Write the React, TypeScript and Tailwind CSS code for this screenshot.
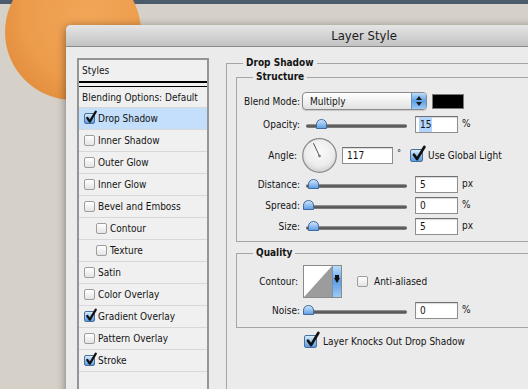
import React from "react";

const F = "font-['DejaVu_Sans_Condensed','DejaVu_Sans','Liberation_Sans',sans-serif]";

function Box({ checked, big }: { checked?: boolean; big?: boolean }) {
  return (
    <div className={big ? "relative shrink-0 w-[13px] h-[13px]" : "relative shrink-0 w-[11px] h-[11px]"}>
      <div
        className={
          checked
            ? "w-full h-full rounded-[2px] border border-[#4a6f9c] bg-gradient-to-b from-[#dcecfb] via-[#93c2ef] to-[#5b9be2]"
            : "w-full h-full rounded-[2px] border border-[#9d9d9d] bg-gradient-to-b from-[#ffffff] to-[#e4e4e4]"
        }
      />
      {checked && (
        <svg
          className={big ? "absolute left-[1px] top-[-4px]" : "absolute left-[1px] top-[-3px]"}
          width={big ? 15 : 12}
          height={big ? 17 : 14}
          viewBox="0 0 12 14"
        >
          <path d="M2.3 8 L4.8 11.6 L10.8 1.6" stroke="#111" strokeWidth="2.2" fill="none" strokeLinecap="round" strokeLinejoin="round" />
        </svg>
      )}
    </div>
  );
}

function Slider({ knob }: { knob: string }) {
  return (
    <div className="relative ml-[3px] w-[104px] h-[17px] shrink-0">
      <div className="absolute left-[3px] right-0 top-[8px] h-[4px] rounded-full bg-gradient-to-b from-[#a8a8a8] via-[#4a4a4a] to-[#8e8e8e]" />
      <svg className={`absolute top-[3px] ${knob}`} width="11" height="10" viewBox="0 0 11 10">
        <defs>
          <linearGradient id="kg" x1="0" y1="0" x2="0" y2="1">
            <stop offset="0" stopColor="#d4e8fb" />
            <stop offset="1" stopColor="#5c9ce2" />
          </linearGradient>
        </defs>
        <path d="M0.5 9.5 L0.5 5.2 Q0.8 0.8 5.5 0.5 Q10.2 0.8 10.5 5.2 L10.5 9.5 Z" fill="url(#kg)" stroke="#3d6b9f" strokeWidth="1" />
      </svg>
    </div>
  );
}

function Input({ value, hl, w }: { value: string; hl?: boolean; w?: string }) {
  return (
    <div
      className={`${w ?? "w-[43px]"} h-[17px] shrink-0 bg-white border border-[#8e8e8e] border-t-[#6f6f6f] shadow-[inset_0_1px_1px_rgba(0,0,0,0.15)] flex items-center pl-[3px]`}
    >
      <span className={hl ? "bg-[#b3d4fc] px-[1px]" : "px-[1px]"}>{value}</span>
    </div>
  );
}

function Label({ children, pr }: { children: React.ReactNode; pr?: string }) {
  return <div className={`w-[63px] shrink-0 text-right ${pr ?? ""}`}>{children}</div>;
}

const listRows: { label: string; checked?: boolean; selected?: boolean; indent?: boolean }[] = [
  { label: "Drop Shadow", checked: true, selected: true },
  { label: "Inner Shadow" },
  { label: "Outer Glow" },
  { label: "Inner Glow" },
  { label: "Bevel and Emboss" },
  { label: "Contour", indent: true },
  { label: "Texture", indent: true },
  { label: "Satin" },
  { label: "Color Overlay" },
  { label: "Gradient Overlay", checked: true },
  { label: "Pattern Overlay" },
  { label: "Stroke", checked: true },
];

export default function App() {
  return (
    <div className={`relative w-[528px] h-[389px] overflow-hidden bg-[#d6d1c8] ${F} text-[10px] text-[#141414]`}>
      <div className="h-[4px] bg-[#4b5b6c]" />
      <div className="absolute left-[5px] top-[-36px] w-[136px] h-[136px] rounded-full bg-[radial-gradient(circle_at_62%_38%,#f2a658_0%,#ec9c4b_55%,#e08a3a_85%,#d57d35_100%)]" />

      <div className="absolute left-[66px] top-[25px] w-[596px] h-[400px] rounded-t-[5px] bg-[#ebebeb] shadow-[0_2px_10px_rgba(0,0,0,0.45)] flex flex-col">
        <div className="h-[22px] shrink-0 rounded-t-[5px] border-b border-[#8a8a8a] bg-gradient-to-b from-[#e5e5e5] to-[#c3c3c3] flex items-center justify-center text-[13px] text-[#1c1c1c]">
          Layer Style
        </div>

        <div className="flex pl-[11px] pt-[11px]">
          {/* Styles list */}
          <div className="w-[132px] h-[340px] shrink-0 border-2 border-[#959595] bg-[#f0f0f0] flex flex-col">
            <div className="h-[23px] border-b-2 border-black flex items-center pl-[3px]">Styles</div>
            <div className="h-[4px] border-b border-black" />
            <div className="h-[21px] border-b border-[#d8d8d8] flex items-center pl-[3px]">Blending Options: Default</div>
            {listRows.map((r) => (
              <div
                key={r.label}
                className={`h-[22px] border-b border-[#d8d8d8] flex items-center gap-[3px] ${r.indent ? "pl-[17px]" : "pl-[5px]"} ${r.selected ? "bg-[#c4dffb]" : ""}`}
              >
                <Box checked={r.checked} />
                <span>{r.label}</span>
              </div>
            ))}
          </div>

          {/* Right panel */}
          <div className="ml-[17px] mt-[-1px]">
            <fieldset className="w-[420px] h-[340px] border border-[#a6a6a6]">
              <legend className="ml-[16px] px-[3px] font-bold leading-[12px]">Drop Shadow</legend>
              <div className="pl-[9px]">
                <fieldset className="mt-[2px] w-[380px] border border-[#a6a6a6]">
                  <legend className="ml-[16px] px-[3px] font-bold leading-[12px]">Structure</legend>
                  <div className="pt-[9px] pb-[6px] flex flex-col">
                    <div className="flex items-center h-[18px]">
                      <Label>Blend Mode:</Label>
                      <div className="ml-[2px] flex w-[125px] h-[18px] rounded-[4px] border border-[#8a8a8a] bg-gradient-to-b from-white to-[#e2e2e2] shadow-[0_1px_1px_rgba(0,0,0,0.15)] overflow-hidden">
                        <div className="flex-1 pl-[7px] flex items-center">Multiply</div>
                        <div className="w-[15px] border-l border-[#6d93bd] bg-gradient-to-b from-[#bcdcfa] via-[#5d9fe6] to-[#9ccaf5] flex flex-col items-center justify-center gap-[2px]">
                          <svg width="6" height="4" viewBox="0 0 6 4"><path d="M0 4 L3 0 L6 4 Z" fill="#1a1a1a" /></svg>
                          <svg width="6" height="4" viewBox="0 0 6 4"><path d="M0 0 L3 4 L6 0 Z" fill="#1a1a1a" /></svg>
                        </div>
                      </div>
                      <div className="ml-[5px] w-[32px] h-[15px] bg-black border border-[#7a7a7a]" />
                    </div>

                    <div className="flex items-center h-[17px] mt-[6px]">
                      <Label>Opacity:</Label>
                      <Slider knob="left-[13px]" />
                      <div className="ml-[8px]"><Input value="15" hl /></div>
                      <span className="ml-[4px] self-start">%</span>
                    </div>

                    <div className="flex items-center h-[35px] mt-[5px]">
                      <Label pr="pr-[3px]">Angle:</Label>
                      <svg className="ml-[2px] shrink-0" width="35" height="35" viewBox="0 0 35 35">
                        <defs>
                          <radialGradient id="dg" cx="0.5" cy="0.4" r="0.6">
                            <stop offset="0" stopColor="#fafafa" />
                            <stop offset="0.7" stopColor="#ececec" />
                            <stop offset="1" stopColor="#cfcfcf" />
                          </radialGradient>
                        </defs>
                        <circle cx="17.5" cy="17.5" r="16.8" fill="url(#dg)" stroke="#8a8a8a" strokeWidth="1.2" />
                        <line x1="17.5" y1="18" x2="11.4" y2="5.2" stroke="#555" strokeWidth="1" />
                        <circle cx="17.5" cy="18" r="1.3" fill="#777" />
                      </svg>
                      <div className="ml-[5px]"><Input value="117" w="w-[51px]" /></div>
                      <span className="ml-[4px] self-start mt-[9px] text-[9px]">°</span>
                      <div className="ml-[9px]"><Box checked big /></div>
                      <span className="ml-[5px]">Use Global Light</span>
                    </div>

                    {[
                      { l: "Distance:", v: "5", k: "left-[5px]", u: "px" },
                      { l: "Spread:", v: "0", k: "left-[0px]", u: "%" },
                      { l: "Size:", v: "5", k: "left-[5px]", u: "px" },
                    ].map((r, i) => (
                      <div key={r.l} className={`flex items-center h-[17px] ${i === 0 ? "mt-[3px]" : "mt-[4px]"}`}>
                        <Label>{r.l}</Label>
                        <Slider knob={r.k} />
                        <div className="ml-[8px]"><Input value={r.v} /></div>
                        <span className="ml-[4px] self-start">{r.u}</span>
                      </div>
                    ))}
                  </div>
                </fieldset>

                <fieldset className="mt-[5px] w-[380px] border border-[#a6a6a6]">
                  <legend className="ml-[16px] px-[3px] font-bold leading-[12px]">Quality</legend>
                  <div className="pt-[6px] pb-[8px] flex flex-col">
                    <div className="flex items-center h-[33px]">
                      <Label pr="pr-[2px]">Contour:</Label>
                      <div className="ml-[3px] flex w-[39px] h-[33px] border border-[#8a8a8a] bg-white overflow-hidden">
                        <svg width="28" height="31" viewBox="0 0 28 31" className="shrink-0">
                          <path d="M0 31 L28 0 L28 31 Z" fill="#9c9c9c" />
                        </svg>
                        <div className="flex-1 border-l border-[#6d93bd] bg-gradient-to-b from-[#bcdcfa] via-[#5d9fe6] to-[#9ccaf5] flex items-start justify-center pt-[9px]">
                          <svg width="6" height="8" viewBox="0 0 6 8"><path d="M1 0 H5 V3 H6 L3 8 L0 3 H1 Z" fill="#111" /></svg>
                        </div>
                      </div>
                      <div className="ml-[15px]"><Box /></div>
                      <span className="ml-[6px]">Anti-aliased</span>
                    </div>
                    <div className="flex items-center h-[17px] mt-[4px]">
                      <Label>Noise:</Label>
                      <Slider knob="left-[0px]" />
                      <div className="ml-[8px]"><Input value="0" /></div>
                      <span className="ml-[4px] self-start">%</span>
                    </div>
                  </div>
                </fieldset>

                <div className="mt-[6px] flex items-center pl-[68px]">
                  <Box checked big />
                  <span className="ml-[6px]">Layer Knocks Out Drop Shadow</span>
                </div>
              </div>
            </fieldset>
          </div>
        </div>
      </div>
    </div>
  );
}
